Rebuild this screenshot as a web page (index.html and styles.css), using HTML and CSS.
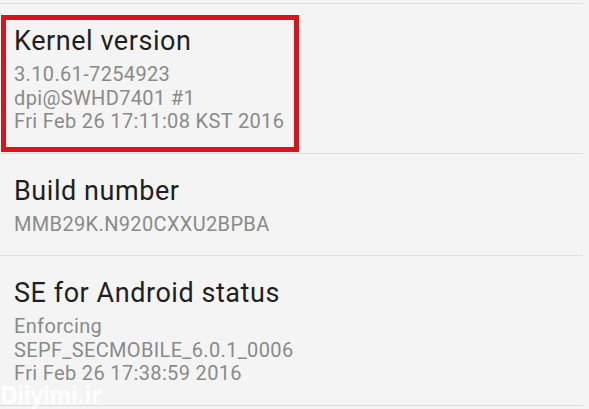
FILE: index.html
```html
<!DOCTYPE html>
<html>
<head>
<meta charset="utf-8">
<link rel="stylesheet" href="styles.css">
</head>
<body>
<div class="screen">
  <ul class="list">
    <li class="item">
      <div class="title">Kernel version</div>
      <div class="sub">3.10.61-7254923</div>
      <div class="sub">dpi@SWHD7401 #1</div>
      <div class="sub">Fri Feb 26 17:11:08 KST 2016</div>
    </li>
    <li class="item">
      <div class="title">Build number</div>
      <div class="sub">MMB29K.N920CXXU2BPBA</div>
    </li>
    <li class="item">
      <div class="title">SE for Android status</div>
      <div class="sub">Enforcing</div>
      <div class="sub">SEPF_SECMOBILE_6.0.1_0006</div>
      <div class="sub">Fri Feb 26 17:38:59 2016</div>
    </li>
  </ul>
  <div class="highlight"></div>
  <div class="watermark">Diiyimi.ir</div>
</div>
</body>
</html>
```
FILE: styles.css
```css
html, body {
  margin: 0;
  padding: 0;
  background: #f4f4f4;
}
.screen {
  position: relative;
  width: 589px;
  height: 409px;
  overflow: hidden;
  background: #f4f4f4;
  font-family: Roboto, "Liberation Sans", sans-serif;
}
.list {
  list-style: none;
  margin: 3px 6px 0 0;
  padding: 0;
  border-top: 1px solid #dedede;
}
.item {
  padding: 22px 0 19px 14px;
  border-bottom: 1px solid #dedede;
}
.title {
  font-size: 27px;
  line-height: 30px;
  letter-spacing: 0.55px;
  color: #1f1f1f;
  margin-bottom: 7px;
}
.sub {
  font-size: 20px;
  line-height: 23.5px;
  letter-spacing: 0.35px;
  color: #8a8a8a;
}
.highlight {
  position: absolute;
  left: 1px;
  top: 15px;
  width: 288px;
  height: 127px;
  border: 5px solid #d9141c;
}
.watermark {
  position: absolute;
  left: 0;
  top: 383px;
  font-family: "DejaVu Sans", sans-serif;
  font-stretch: condensed;
  font-weight: bold;
  font-size: 24px;
  line-height: 26px;
  letter-spacing: -1px;
  color: #ffffff;
  opacity: 0.9;
}
```
